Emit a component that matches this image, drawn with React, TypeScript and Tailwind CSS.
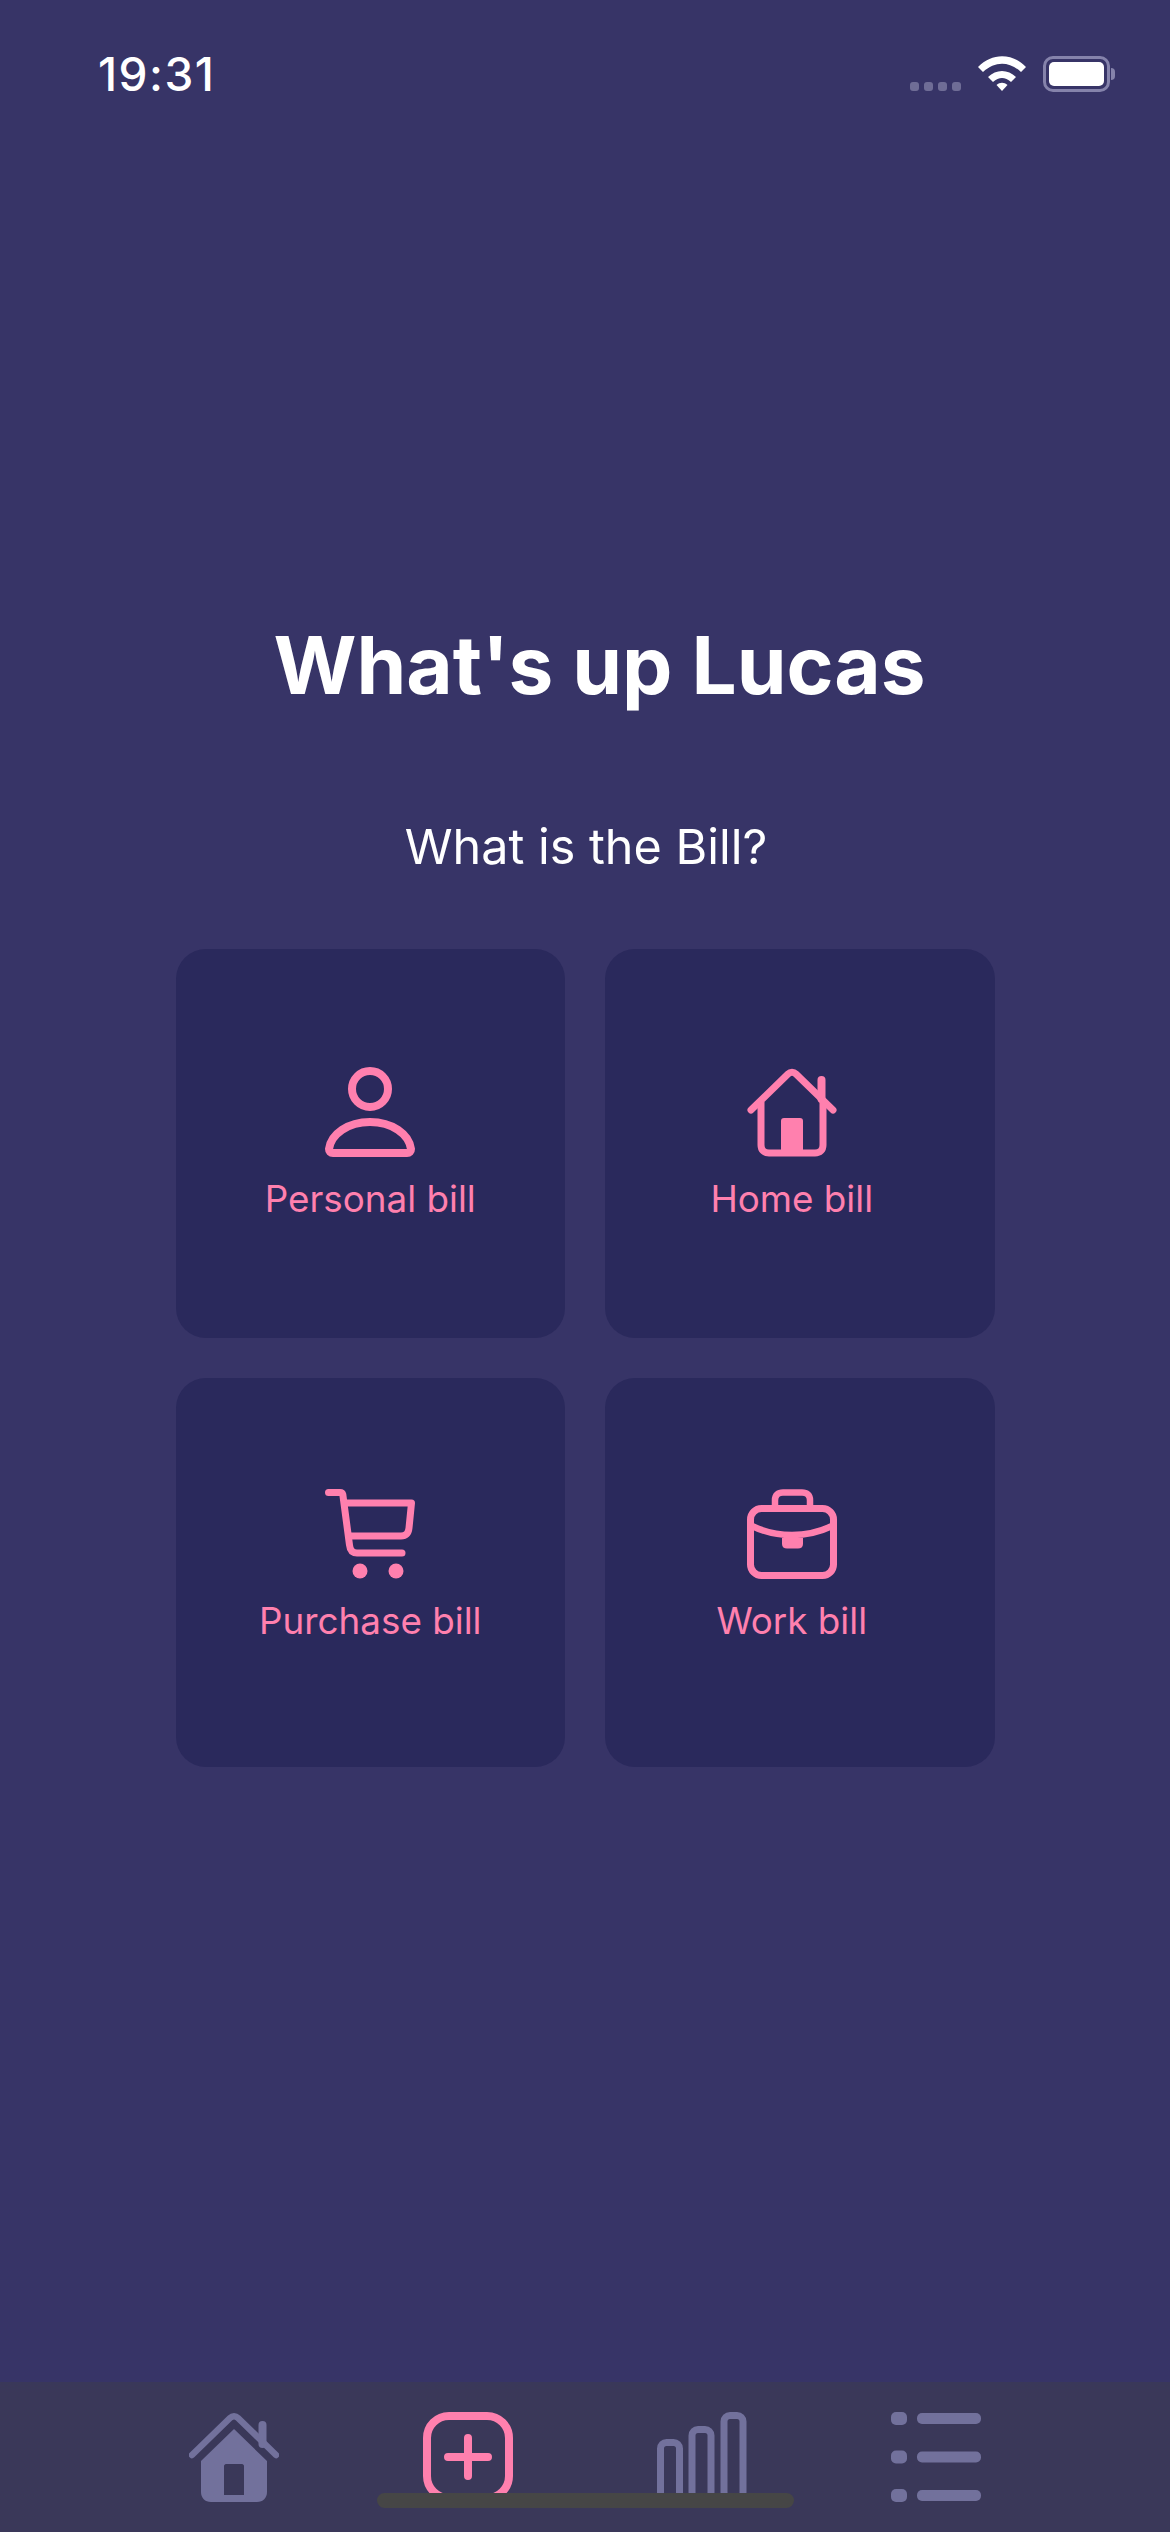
import React from 'react';

const PersonIcon = () => (
    <svg viewBox="0 0 90 90" className="w-[90px] h-[90px]" fill="none" stroke="#ff80ae" strokeWidth="8" strokeLinejoin="round">
        <circle cx="45" cy="22" r="18" />
        <path d="M8 86H82C84.5 86 86 84.5 86 82C84 67 67 55 45 55C23 55 6 67 4 82C4 84.5 5.500 86 8 86Z" />
    </svg>
);

const HomeIcon = () => (
    <svg viewBox="0 0 90 90" className="w-[90px] h-[90px]" fill="none" stroke="#ff80ae" strokeLinecap="round" strokeLinejoin="round">
        <path d="M4 43L41 7C43.500 4.500 46.500 4.500 49 7L86 43" strokeWidth="7" />
        <path d="M14 35V78C14 83 17 86 22 86H68C73 86 76 83 76 78V35" strokeWidth="7" strokeLinecap="butt" />
        <path d="M74.500 13V32" strokeWidth="8" />
        <path d="M34 54C34 52 35 51 37 51H53C55 51 56 52 56 54V84H34Z" fill="#ff80ae" stroke="none" />
    </svg>
);

const CartIcon = () => (
    <svg viewBox="0 0 90 90" className="w-[90px] h-[90px]" fill="none" stroke="#ff80ae" strokeWidth="7" strokeLinecap="round" strokeLinejoin="round">
        <path d="M3.500 3.500H15C16.500 3.500 17.500 4 17.800 5.500L24.500 56C25 61 27 64 32 64H77" />
        <path d="M21 14H86.500L84 39C83.500 44 81 47 76 47H25" />
        <circle cx="35" cy="82" r="7.500" fill="#ff80ae" stroke="none" />
        <circle cx="71" cy="82" r="7.500" fill="#ff80ae" stroke="none" />
    </svg>
);

const BriefcaseIcon = () => (
    <svg viewBox="0 0 90 90" className="w-[90px] h-[90px]" fill="none" stroke="#ff80ae" strokeWidth="7">
        <path d="M28 16V11C28 6 31 3.500 36 3.500H55C60 3.500 63 6 63 11V16" strokeWidth="6.500" />
        <rect x="3.500" y="19.500" width="83" height="67" rx="11" />
        <path d="M5 37C30 49 60 49 85 37" strokeWidth="6.500" />
        <path d="M35 49H56V55C56 58 54 59.500 51 59.500H40C37 59.500 35 58 35 55Z" fill="#ff80ae" stroke="none" />
    </svg>
);

const TabHomeIcon = () => (
    <svg viewBox="0 0 90 90" className="w-[90px] h-[90px]" fill="none" stroke="#72719c" strokeLinecap="round" strokeLinejoin="round">
        <path d="M3 43L41 6C43.500 3.500 46.500 3.500 49 6L87 43" strokeWidth="6.500" />
        <path d="M73.500 13V32" strokeWidth="8" />
        <path
            fillRule="evenodd"
            fill="#72719c"
            stroke="none"
            d="M45 17L78 49V80C78 86 74 90 68 90H22C16 90 12 86 12 80V49ZM35 54V83H55V54C55 53 54 52 53 52H37C36 52 35 53 35 54Z"
        />
    </svg>
);

const TabAddIcon = () => (
    <svg viewBox="0 0 90 90" className="w-[90px] h-[90px]" fill="none" stroke="#ff80ae" strokeWidth="8" strokeLinecap="round">
        <rect x="4" y="4" width="82" height="82" rx="22" />
        <path d="M25 45H65M45 26V64" />
    </svg>
);

const TabChartIcon = () => (
    <svg viewBox="0 0 90 90" className="w-[90px] h-[90px]" fill="none" stroke="#72719c" strokeWidth="7">
        <rect x="3.500" y="30.500" width="19" height="56" rx="6" />
        <rect x="35" y="17.500" width="19" height="69" rx="6" />
        <rect x="67" y="3.500" width="19" height="83" rx="6" />
    </svg>
);

const TabListIcon = () => (
    <svg viewBox="0 0 90 90" className="w-[90px] h-[90px]" fill="#72719c">
        <rect x="0" y="0" width="16" height="13" rx="5" />
        <rect x="26" y="1" width="64" height="11" rx="5" />
        <rect x="0" y="38.500" width="16" height="13" rx="5" />
        <rect x="26" y="39.500" width="64" height="11" rx="5" />
        <rect x="0" y="77" width="16" height="13" rx="5" />
        <rect x="26" y="78" width="64" height="11" rx="5" />
    </svg>
);

const StatusIcons = () => (
    <div className="flex items-end">
        <div className="flex gap-[5px] mb-[1px]">
            <div className="w-[9px] h-[9px] rounded-[3px] bg-[#6f6d96]"></div>
            <div className="w-[9px] h-[9px] rounded-[3px] bg-[#6f6d96]"></div>
            <div className="w-[9px] h-[9px] rounded-[3px] bg-[#6f6d96]"></div>
            <div className="w-[9px] h-[9px] rounded-[3px] bg-[#6f6d96]"></div>
        </div>
        <svg viewBox="0 0 48 35" className="w-[48px] h-[35px] ml-[17px] mb-[1px]" fill="#ffffff">
            <path d="M0 11C14-3.500 34-3.500 48 11L43 16C31 5 17 5 5 16Z" />
            <path d="M10 21C18 13 30 13 38 21L33 26C27 20.500 21 20.500 15 26Z" />
            <path d="M18.500 29C22 26 26 26 29.500 29L24 35Z" />
        </svg>
        <div className="ml-[17px] w-[67px] h-[36px] rounded-[10px] border-[3px] border-[#8583ab] p-[3px]">
            <div className="w-full h-full rounded-[5px] bg-white"></div>
        </div>
        <div className="w-[4px] h-[12px] mb-[12px] ml-[1px] rounded-r-full bg-[#8583ab]"></div>
    </div>
);

const BillCard: React.FC<{ label: string; className: string; children: React.ReactNode }> = ({ label, className, children }) => (
    <div className={`h-[389px] rounded-[30px] bg-[#2a295c] flex flex-col items-center ${className}`}>
        {children}
        <span className="mt-[20px] text-[36.800px] leading-[44px] text-[#ff80ae]">{label}</span>
    </div>
);

const App: React.FC = () => {
    return (
        <div className="relative w-[1170px] h-[2532px] flex flex-col bg-[#373467] text-white font-['Inter','Noto_Sans',sans-serif] overflow-hidden">
            <div className="flex justify-between items-start pt-[56px] pl-[98px] pr-[55px]">
                <span className="text-[46px] leading-[36px] font-medium tracking-[1.5px]">19:31</span>
                <StatusIcons />
            </div>

            <div className="flex flex-col items-center">
                <h1 className="mt-[523px] pl-[29px] text-[80px] leading-[100px] font-bold">What's up Lucas</h1>
                <p className="mt-[102px] pl-[2px] text-[48.500px] leading-[60px]">What is the Bill?</p>
                <div className="mt-[72px] w-[819px] grid grid-cols-2 gap-x-[40px] gap-y-[40px]">
                    <BillCard label="Personal bill" className="pt-[118px]"><PersonIcon /></BillCard>
                    <BillCard label="Home bill" className="pt-[118px] pr-[16px]"><HomeIcon /></BillCard>
                    <BillCard label="Purchase bill" className="pt-[111px]"><CartIcon /></BillCard>
                    <BillCard label="Work bill" className="pt-[111px] pr-[16px]"><BriefcaseIcon /></BillCard>
                </div>
            </div>

            <div className="mt-auto h-[150px] bg-[#3a3859] flex justify-center pt-[30px]">
                <div className="w-[234px] flex justify-center"><TabHomeIcon /></div>
                <div className="w-[234px] flex justify-center"><TabAddIcon /></div>
                <div className="w-[234px] flex justify-center"><TabChartIcon /></div>
                <div className="w-[234px] flex justify-center"><TabListIcon /></div>
            </div>

            <div className="absolute left-[377px] bottom-[24px] w-[417px] h-[15px] rounded-full bg-[#464646]"></div>
        </div>
    );
};

export default App;
